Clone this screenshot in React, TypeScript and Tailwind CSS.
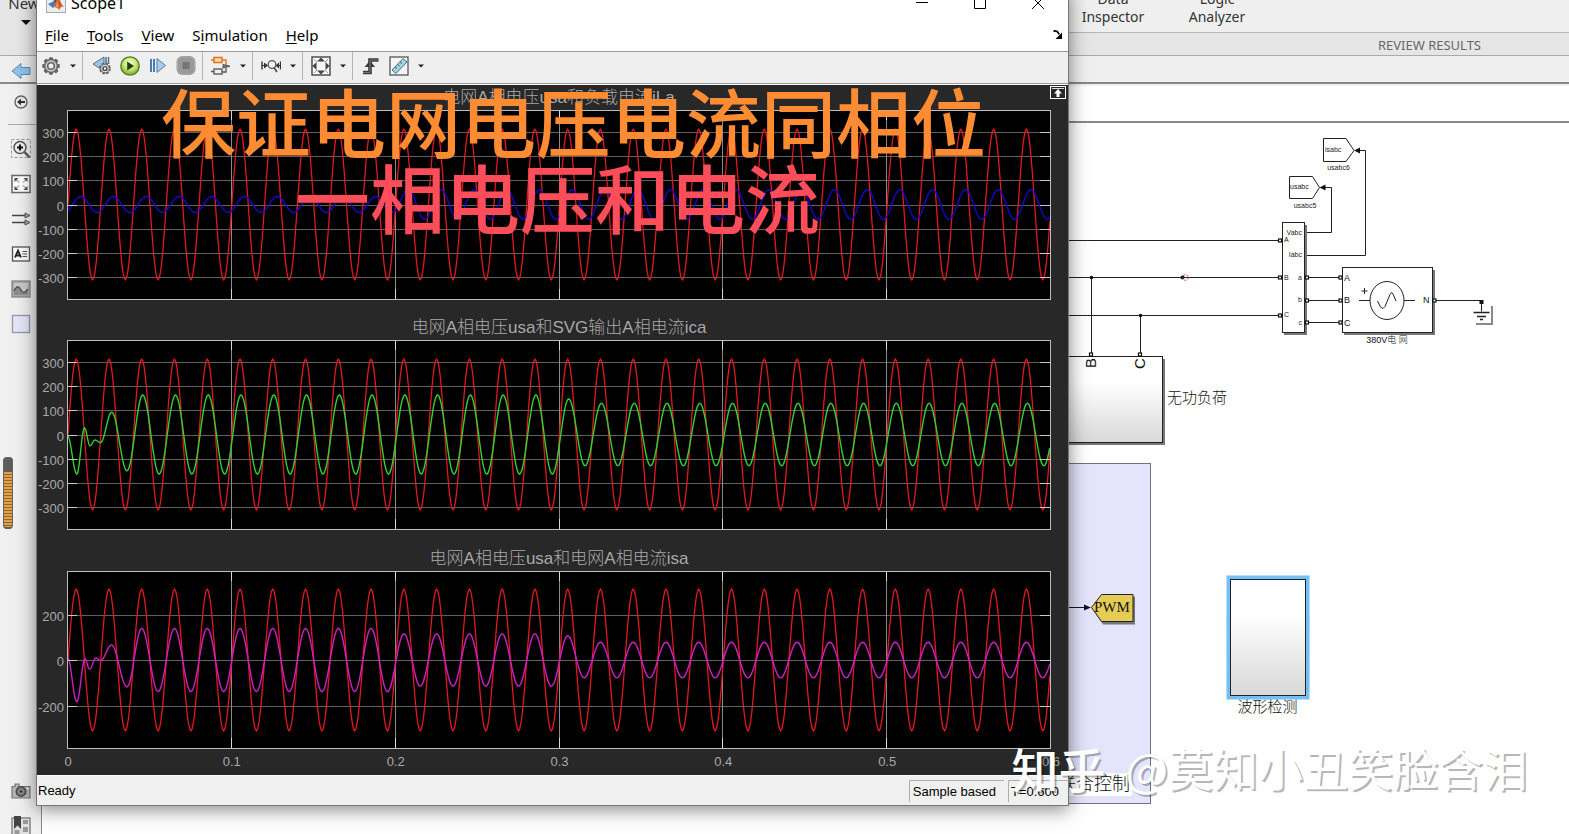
import React from "react";

type Point = [number, number];

const PLOT_LEFT = 30;
const PLOT_WIDTH = 983;
const SECONDS = 0.6;
const PX_PER_CYCLE = PLOT_WIDTH / (SECONDS / 0.02);

/** Joins successive extremes of a signal with half-cosine arcs. */
function trace(extremes: Point[], zero: number, scale: number): string {
  const out: string[] = [];
  const end = PLOT_LEFT + PLOT_WIDTH;
  for (let i = 0; i < extremes.length - 1; i++) {
    const [x0, v0] = extremes[i];
    const [x1, v1] = extremes[i + 1];
    const steps = 14;
    for (let s = 0; s < steps; s++) {
      const k = s / steps;
      const x = x0 + (x1 - x0) * k;
      if (x < PLOT_LEFT || x > end) continue;
      const v = v0 + ((v1 - v0) * (1 - Math.cos(Math.PI * k))) / 2;
      out.push(`${(x + 0.5).toFixed(2)},${(zero - v * scale).toFixed(2)}`);
    }
  }
  return out.join(" ");
}

/** Extremes of a 50 Hz sine; amplitude is looked up per half cycle. */
function sineExtremes(delay: number, firstHalf: number, amp: (t: number) => number): Point[] {
  const pts: Point[] = [];
  for (let n = firstHalf; n < 62; n++) {
    const x = PLOT_LEFT + delay + PX_PER_CYCLE * (0.25 + n / 2);
    const t = 0.005 + n * 0.01;
    pts.push([x, (n % 2 === 0 ? 1 : -1) * amp(t)]);
  }
  return pts;
}

const voltage = sineExtremes(0.5, -1, () => 311);
const loadCurrent = sineExtremes(5, -1, (t) => (t < 0.2 ? 33 : 61));
const svgCurrent: Point[] = [
  [30, -5], [39.3, -163], [47, 27], [52.5, -46], [57.5, -23], [63, -33], [74.3, 92], [89.5, -150],
  ...sineExtremes(1.5, 4, (t) => (t < 0.3 ? 163 : t < 0.31 ? 147 : 129)),
];
const gridCurrent: Point[] = [
  [30, 12], [39.3, -183], [47.5, 5], [52, -40], [58.5, 9], [63, -3], [74, 66], [89.5, -118],
  ...sineExtremes(0.5, 4, (t) => (t < 0.2 ? 139 : t < 0.3 ? 115 : t < 0.31 ? 106 : 78)),
];

interface PlotProps {
  title: string;
  height: number;
  bottom: number;
  zero: number;
  scale: number;
  ticks: number[];
  signal: Point[];
  color: string;
  timeAxis?: boolean;
}

function Plot({ title, height, bottom, zero, scale, ticks, signal, color, timeAxis }: PlotProps) {
  const right = PLOT_LEFT + PLOT_WIDTH;
  const verticals = [1, 2, 3, 4, 5].map((n) => Math.round(PLOT_LEFT + (PLOT_WIDTH * n) / 6) + 0.5);
  return (
    <section className="flex flex-col">
      <h2 className="h-6 pr-[17px] pl-[30px] text-center text-[17px] leading-6 font-light whitespace-nowrap text-[#a8a8a8]">
        {title}
      </h2>
      <svg viewBox={`0 0 1031 ${height}`} className="block w-full" role="img" aria-label={title}>
        <rect x={PLOT_LEFT + 0.5} y="0.5" width={PLOT_WIDTH} height={bottom} fill="#000" />
        {ticks.map((v) => {
          const y = Math.round(zero - v * scale) + 0.5;
          return <path key={v} d={`M${PLOT_LEFT} ${y}H${right}`} stroke="#5c625f" />;
        })}
        {verticals.map((x) => (
          <path key={x} d={`M${x} 0V${bottom}`} stroke="#8a8a8a" />
        ))}
        <polyline points={trace(voltage, zero, scale)} fill="none" stroke="#e0191f" strokeWidth="1.3" />
        <polyline points={trace(signal, zero, scale)} fill="none" stroke={color} strokeWidth="1.4" />
        {ticks.map((v) => {
          const y = Math.round(zero - v * scale) + 0.5;
          return <path key={v} d={`M${PLOT_LEFT} ${y}h10M${right} ${y}h-10`} stroke="#c8c8c8" />;
        })}
        {verticals.map((x) => (
          <path key={x} d={`M${x} 0v10M${x} ${bottom}v-10`} stroke="#d8d8d8" />
        ))}
        <rect x={PLOT_LEFT + 0.5} y="0.5" width={PLOT_WIDTH} height={bottom} fill="none" stroke="#bdbdbd" />
        <g fill="#a8a8a8" fontSize="13">
          {ticks.map((v) => (
            <text key={v} x="27" y={zero - v * scale + 6} textAnchor="end">
              {v}
            </text>
          ))}
          {timeAxis &&
            [0, 0.1, 0.2, 0.3, 0.4, 0.5, 0.6].map((t, n) => (
              <text key={t} x={PLOT_LEFT + 1 + (PLOT_WIDTH * n) / 6} y={bottom + 18} textAnchor="middle">
                {t}
              </text>
            ))}
        </g>
      </svg>
    </section>
  );
}

function Icon({ children, size = 20 }: { children: React.ReactNode; size?: number }) {
  return (
    <svg viewBox="0 0 20 20" width={size} height={size} fill="none" aria-hidden="true" className="shrink-0">
      {children}
    </svg>
  );
}

function Tool({ label, children }: { label: string; children: React.ReactNode }) {
  return (
    <button type="button" aria-label={label} className="flex h-7 w-7 items-center justify-center">
      <Icon>{children}</Icon>
    </button>
  );
}

function Caret({ label }: { label: string }) {
  return (
    <button type="button" aria-label={label} className="flex h-7 w-4 items-center justify-center">
      <svg viewBox="0 0 6 4" className="h-1 w-1.5" aria-hidden="true">
        <path d="M0 0.5h6L3 3.5z" fill="#222" />
      </svg>
    </button>
  );
}

function Separator() {
  return <span className="mr-1 ml-px h-7 w-px bg-[#b4b4b4]" />;
}

const gearTeeth = [0, 45, 90, 135, 180, 225, 270, 315];

function Toolbar() {
  return (
    <div className="flex h-8 shrink-0 items-center border-t border-[#999] bg-[#efefef] pb-[3px]" role="toolbar">
      <Tool label="Configuration">
        {gearTeeth.map((a) => (
          <rect key={a} x="8" y="1.2" width="4" height="5" rx="1" fill="#666" transform={`rotate(${a} 10 10)`} />
        ))}
        <circle cx="10" cy="10" r="6.4" fill="#ccc" stroke="#666" strokeWidth="1.5" />
        <circle cx="10" cy="10" r="3.3" fill="#eee" stroke="#666" strokeWidth="1.6" />
      </Tool>
      <Caret label="Configuration menu" />
      <Separator />
      <div className="flex px-px">
        <Tool label="Step back">
          <path d="M1 8 12 1v14z" fill="#9fc4e4" stroke="#4b7094" />
          <path d="M14 1v6M16.500 1v7" stroke="#4b7094" strokeWidth="1.5" />
          <circle cx="13" cy="12.500" r="5" fill="#ddd" stroke="#555" strokeWidth="1.6" strokeDasharray="2.600 1.300" />
          <circle cx="13" cy="12.500" r="4.300" fill="#ddd" stroke="#666" />
          <circle cx="13" cy="12.500" r="1.900" fill="#fff" stroke="#444" strokeWidth="1.400" />
        </Tool>
        <Tool label="Run">
          <defs>
            <radialGradient id="run" cx=".5" cy=".35" r=".6">
              <stop offset="0" stopColor="#f3fbd9" />
              <stop offset=".55" stopColor="#cbe87a" />
              <stop offset="1" stopColor="#84b52c" />
            </radialGradient>
          </defs>
          <circle cx="10" cy="10" r="9.200" fill="url(#run)" stroke="#527a1c" strokeWidth="1.300" />
          <path d="M7.200 5.500v9l6.800-4.500z" fill="#263d12" />
        </Tool>
        <Tool label="Step forward">
          <path d="M3 3v13M6 3v13" stroke="#4b7cb0" strokeWidth="2" />
          <path d="M9 2.500v14l8.500-7z" fill="#a8cdea" stroke="#4b7cb0" />
        </Tool>
        <Tool label="Stop">
          <rect x=".5" y="0" width="19" height="19" rx="6" fill="#999" />
          <rect x="1.500" y="1" width="17" height="17" rx="5" stroke="#aaa" />
          <rect x="6.500" y="6" width="7" height="7" fill="#747474" />
        </Tool>
      </div>
      <Separator />
      <Tool label="Highlight block">
        <rect x="3" y="1.500" width="8" height="5" fill="#fbd9b0" stroke="#e07a20" strokeWidth="1.600" />
        <path d="M0 4h3M11 4h4v5" stroke="#e07a20" strokeWidth="1.400" />
        <path d="M12 8.500v3.500l7-1.800z" fill="#777" stroke="#555" />
        <path d="M15 12v4h-4M0 15.500h3" stroke="#555" strokeWidth="1.300" />
        <rect x="3" y="13" width="8" height="5" fill="#eee" stroke="#666" strokeWidth="1.500" />
      </Tool>
      <Caret label="Highlight menu" />
      <Separator />
      <Tool label="Zoom">
        <path d="M1 5.500v8M19.500 5.500v8" stroke="#333" strokeWidth="1.400" />
        <path d="M1 9.500h4M3 7l3.500 2.500L3 12M19 9.500h-3M18 7l-3 2.500 3 2.500" fill="#333" stroke="#333" />
        <circle cx="11" cy="8.500" r="3.800" fill="#f5f5f5" stroke="#555" strokeWidth="1.300" />
        <path d="m13 11.500 3 4.500" stroke="#555" strokeWidth="1.800" />
      </Tool>
      <Caret label="Zoom menu" />
      <Separator />
      <Tool label="Scale axes">
        <rect x="1" y="1" width="18" height="18" fill="#fafafa" stroke="#444" strokeWidth="1.400" />
        <path d="m10 1.500 4 4H6zM10 18.500l4-4H6zM1.500 10l4-4v8zM18.500 10l-4-4v8z" fill="#444" />
        <path d="m3 3 3 3M17 3l-3 3M3 17l3-3M17 17l-3-3" stroke="#999" />
      </Tool>
      <Caret label="Scale menu" />
      <Separator />
      <Tool label="Trigger">
        <path d="M2 16.500h7V4h8.500" stroke="#3a3a3a" strokeWidth="3.600" />
        <path d="m9 4.500 5 6.500H3.500z" fill="#3a3a3a" />
        <path d="M2 16.500h7V4h8.500" stroke="#777" strokeWidth="1" />
      </Tool>
      <Tool label="Measurements">
        <rect x="1" y="1" width="18" height="18" fill="#f5f5f5" stroke="#555" strokeWidth="1.300" />
        <path d="M3 14 14 2.500l4 3.500L7 17.500z" fill="#a9cfe2" stroke="#3e738c" />
        <path d="m6 11 2 1.600M8.500 8.500l2 1.600M11 6l2 1.600" stroke="#2d5f78" />
      </Tool>
      <Caret label="Measurements menu" />
    </div>
  );
}

const menus: [string, string, string][] = [
  ["", "F", "ile"],
  ["", "T", "ools"],
  ["", "V", "iew"],
  ["S", "i", "mulation"],
  ["", "H", "elp"],
];

function ScopeWindow() {
  return (
    <div className="absolute top-[-11px] right-[500px] bottom-[28px] left-9 flex flex-col border border-[#777] bg-white shadow-[0_3px_18px_rgba(0,0,0,0.5)]">
      <header className="flex h-[29px] shrink-0 items-center pb-1 pl-[9px]">
        <svg viewBox="0 0 20 20" className="h-5 w-5" aria-hidden="true">
          <rect x=".5" y=".5" width="19" height="19" fill="#e8eef2" stroke="#aaa" />
          <path d="m2 11 5-2.500 3 2.500-3 4z" fill="#3d7fb5" />
          <path d="m7 8.500 4.500-5.500 1 3-2.500 5z" fill="#7a4a5a" />
          <path d="M11.500 3c2 3 3.500 8 6.500 11-2-1-3-1-5 3-1-2-3-3-5.500-2.500C10 12 10.500 6 11.500 3z" fill="#d8572a" />
          <path d="M11.500 4c0 4 .5 9 1.500 12-1-2-2-2.500-4-2 2-2 2-6 2.500-10z" fill="#f0a13c" />
        </svg>
        <h1 className="grow pl-[5px] text-base leading-5">Scope1</h1>
        <div className="flex gap-[38px] pr-5">
          {[
            ["Minimize", "M4 9.500h12"],
            ["Maximize", "M4.500 4.500h11v11h-11z"],
            ["Close", "m4 4 12 12M16 4 4 16"],
          ].map(([name, d]) => (
            <button key={name} type="button" aria-label={name} className="h-5 w-5">
              <Icon>
                <path d={d} stroke="#000" />
              </Icon>
            </button>
          ))}
        </div>
      </header>
      <nav className="flex h-8 shrink-0 items-center gap-[18px] pl-2 text-[15px] leading-6">
        {menus.map(([before, key, after]) => (
          <button key={after} type="button">
            {before}
            <span className="underline underline-offset-2">{key}</span>
            {after}
          </button>
        ))}
        <button type="button" aria-label="Dock" className="mr-[5px] ml-auto">
          <Icon size={10}>
            <path d="M1 3c5-3 10 1 11 6" stroke="#000" strokeWidth="3.500" />
            <path d="M18 5v13H5z" fill="#000" />
          </Icon>
        </button>
      </nav>
      <Toolbar />
      <main className="relative flex grow flex-col border-t border-[#999] bg-[#282828] font-['Liberation_Sans','Noto_Sans_CJK_SC',sans-serif] shadow-[inset_0_1px_0_#fff]">
        <div className="flex flex-col gap-4 pt-[2px]">
          <Plot
            title="电网A相电压usa和负载电流iLa"
            height={190}
            bottom={189}
            zero={94.5}
            scale={0.2423}
            ticks={[300, 200, 100, 0, -100, -200, -300]}
            signal={loadCurrent}
            color="#1408c8"
          />
          <Plot
            title="电网A相电压usa和SVG输出A相电流ica"
            height={191}
            bottom={189}
            zero={94.5}
            scale={0.2423}
            ticks={[300, 200, 100, 0, -100, -200, -300]}
            signal={svgCurrent}
            color="#2fd22f"
          />
          <Plot
            title="电网A相电压usa和电网A相电流isa"
            height={200}
            bottom={177}
            zero={89}
            scale={0.2275}
            ticks={[200, 0, -200]}
            signal={gridCurrent}
            color="#cf1fc4"
            timeAxis
          />
        </div>
        <button type="button" aria-label="Maximize axes" className="absolute top-0.5 right-0.5">
          <svg viewBox="0 0 16 13" className="h-[13px] w-4" aria-hidden="true">
            <rect x=".5" y=".5" width="15" height="12" fill="#282828" stroke="#fff" />
            <path d="M2 2.500h12" stroke="#ddd" />
            <path d="m8 3 4 4.500H9.500V11h-3V7.500H4z" fill="#fff" />
          </svg>
        </button>
      </main>
      <footer className="flex h-[30px] shrink-0 items-center border-t border-white bg-[#f0f0f0] font-['Liberation_Sans',sans-serif] text-[13px]">
        <span className="grow pl-px">Ready</span>
        <span className="h-[22px] border-t border-l border-[#b0b0b0] pr-2 pl-[3px] leading-[22px]">Sample based</span>
        <span className="ml-1 h-[22px] border-t border-l border-[#b0b0b0] pr-[9px] pl-[2px] leading-[22px]">T=0.600</span>
      </footer>
    </div>
  );
}

function PaletteButton({ label, children }: { label: string; children: React.ReactNode }) {
  return (
    <button type="button" aria-label={label} className="flex h-[35px] w-full shrink-0 items-center justify-center">
      <Icon>{children}</Icon>
    </button>
  );
}

function Palette() {
  return (
    <aside className="relative flex w-[42px] shrink-0 flex-col border-r border-[#888] bg-[#f0f0f0]">
      <div className="flex h-full w-[41px] flex-col overflow-hidden">
        <PaletteButton label="Hide browser">
          <circle cx="10" cy="10" r="6" fill="#eee" stroke="#666" strokeWidth="1.400" />
          <path d="m6 10 4-3.500v2.500h4v2h-4v2.500z" fill="#333" />
        </PaletteButton>
        <hr className="mt-[5px] mb-1.5 ml-2 border-[#aaa]" />
        <PaletteButton label="Zoom in">
          <rect x=".5" y=".5" width="19" height="18" stroke="#999" strokeDasharray="3 2" />
          <circle cx="9" cy="8.500" r="6" fill="#eee" stroke="#555" strokeWidth="1.500" />
          <path d="M9 5.500v6M6 8.500h6" stroke="#111" strokeWidth="2" />
          <path d="m13.500 13 5 5.500" stroke="#555" strokeWidth="2.400" />
        </PaletteButton>
        <PaletteButton label="Fit to view">
          <rect x="1" y="1.500" width="18" height="17" fill="#fff" stroke="#666" strokeWidth="1.500" />
          <path d="M3.500 8V4h4zM12.500 4h4v4zM3.500 12v4h4zM12.500 16h4v-4z" fill="#444" />
          <path d="m4 4.500 4 4M16 4.500l-4 4M4 15.500l4-4M16 15.500l-4-4" stroke="#666" />
        </PaletteButton>
        <PaletteButton label="Signals">
          <path d="M1 6.500h15M1 13.500h15" stroke="#444" strokeWidth="1.300" />
          <path d="m14 4 5 2.500-5 2.500zM14 11l5 2.500-5 2.500z" fill="#aaa" stroke="#555" />
        </PaletteButton>
        <PaletteButton label="Annotation">
          <rect x="1.500" y="3" width="17" height="14" fill="#fafafa" stroke="#555" strokeWidth="1.300" />
          <path d="M4 13.500 7 6.500l3 7M5 11.500h4" stroke="#222" strokeWidth="1.800" />
          <path d="M11.500 7.500H16M11.500 10H16M11.500 12.500H16" stroke="#555" />
        </PaletteButton>
        <PaletteButton label="Image">
          <rect x="1" y="2" width="18" height="16" fill="#aaa" stroke="#888" strokeWidth="1.300" />
          <rect x="3" y="4" width="14" height="12" fill="#c9c9c9" />
          <path d="M3 12c3-6 5-5 7-1s4 3 7-1v6H3z" fill="#8c8c8c" />
          <path d="M3 12c3-6 5-5 7-1s4 3 7-1" stroke="#555" strokeWidth="1.500" />
        </PaletteButton>
        <PaletteButton label="Area">
          <rect x="1.500" y="1.500" width="17" height="17" fill="#e6e6f8" stroke="#9a9ab0" strokeWidth="1.400" />
        </PaletteButton>
        <div className="mt-auto -mb-[9px] flex flex-col">
          <PaletteButton label="Screenshot">
            <path d="M1 5.500h3V3h4v2.500h11V17H1z" fill="#b5b5b5" stroke="#777" strokeWidth="1.200" />
            <circle cx="10" cy="10.500" r="4.800" fill="#777" stroke="#444" strokeWidth="1.300" />
            <circle cx="10" cy="10.500" r="2" fill="#333" stroke="#aaa" />
            <path d="M15.500 7.500h2" stroke="#fff" strokeWidth="1.500" />
          </PaletteButton>
          <PaletteButton label="Model browser">
            <rect x="1" y="2" width="18" height="20" fill="#e0e0e0" stroke="#777" strokeWidth="1.300" />
            <path d="M3 0h7v13L6.500 9.500 3 13z" fill="#444" />
            <path d="M12 4h5v4h-5zM12 11h5v5h-5zM3.500 14h5v4h-5z" fill="#999" />
          </PaletteButton>
        </div>
      </div>
      <svg viewBox="0 0 10 72" className="absolute top-[373px] left-[3px] h-[72px] w-2.5" aria-hidden="true">
        <rect width="10" height="72" rx="4" fill="#5d5d5d" />
        <rect y="15" width="10" height="55" rx="2" fill="#e3a044" />
        {Array.from({ length: 18 }, (_, i) => (
          <path key={i} d={`M0 ${17.5 + i * 3}h10`} stroke="#8a6a3c" />
        ))}
        <rect x=".5" y=".5" width="9" height="71" rx="4" fill="none" stroke="#6b6258" />
      </svg>
    </aside>
  );
}

function Port({ x, y }: { x: number; y: number }) {
  return <rect x={x - 1.5} y={y - 1.5} width="3" height="3" fill="#fff" stroke="#111" strokeWidth="1.200" />;
}

function Diagram() {
  return (
    <svg
      viewBox="1050 123 519 711"
      className="ml-auto block h-[711px] w-[519px] shrink-0 font-['Liberation_Sans','Noto_Sans_CJK_SC',sans-serif]"
      role="img"
      aria-label="Simulink model"
      fill="none"
      stroke="#222"
    >
      <defs>
        <linearGradient id="block" x2="0" y2="1">
          <stop offset=".3" stopColor="#fff" />
          <stop offset="1" stopColor="#d8d8d8" />
        </linearGradient>
      </defs>

      <rect x="1040.500" y="463.500" width="110" height="340" fill="#e4e4fd" stroke="#707088" />
      <rect x="1052" y="773" width="80" height="23" fill="#fff" stroke="none" />

      <path d="M1050 240.500h230M1050 277.500h230M1050 315.500h230M1091.500 277.500v77M1140.500 315.500v39" />
      <path d="M1306 232.500h25.500v-45h-7M1306 255.500h59.500v-105h-7" />
      <path d="M1306 277.500h36M1306 300.500h36M1306 322.500h36M1434 300.500h47.500v11" />
      <path d="m1319.500 187.500 6-3v6zM1354 150.500l6-3v6z" fill="#111" stroke="none" />
      <circle cx="1091.500" cy="277.500" r="1.800" fill="#111" stroke="none" />
      <circle cx="1140.500" cy="315.500" r="1.800" fill="#111" stroke="none" />
      <circle cx="1182.500" cy="277.500" r="2" fill="#111" stroke="none" />
      <circle cx="1185.500" cy="277.500" r="2.800" stroke="#c33" strokeDasharray="2 1.500" />

      <path d="M1323.500 138.500h22.500l8 12-8 11h-22.500zM1289.500 176.500h23l7 11-7 11h-23z" fill="#fff" />

      <rect x="1284" y="225" width="23" height="110" fill="#777" stroke="none" />
      <rect x="1282.500" y="222.500" width="22" height="110" fill="#fff" />
      <rect x="1344" y="270" width="91" height="65" fill="#777" stroke="none" />
      <rect x="1342.500" y="267.500" width="90" height="65" fill="#fff" />
      <ellipse cx="1387" cy="300.500" rx="17" ry="19" />
      <path d="M1359 300.500h11M1404 300.500h11M1364.500 288v6M1361.500 291h6" />
      <path d="m1377.500 301 3 6 2.500 1.500 2-2 5-12 1.500-2 1.500 1.500 3 7" />

      <rect x="1052" y="359" width="113" height="86" fill="#777" stroke="none" />
      <rect x="1050.500" y="356.500" width="112" height="86" fill="url(#block)" />
      <path d="M1476 324h16v-18" stroke="#888" strokeWidth="2" />
      <path d="M1473.500 312.500h16M1477 316.500h9M1480 319.500h3" strokeWidth="1.400" />
      <rect x="1479.500" y="300" width="4" height="4" fill="#111" stroke="none" />

      <Port x={1280} y={240.5} />
      <Port x={1280} y={277.5} />
      <Port x={1280} y={315.5} />
      <Port x={1307} y={277.5} />
      <Port x={1307} y={300.5} />
      <Port x={1307} y={322.5} />
      <Port x={1340.5} y={277.5} />
      <Port x={1340.5} y={300.5} />
      <Port x={1340.5} y={322.5} />
      <Port x={1434.5} y={300.5} />
      <Port x={1091} y={354.5} />
      <Port x={1140} y={354.5} />

      <path d="M1068 607.500h17" stroke="#113" />
      <path d="m1091 607.500-7-3v6z" fill="#113" stroke="none" />
      <path d="m1093 609.500 10-13h32v28h-32z" fill="#777" stroke="none" />
      <path d="m1091.500 607.500 10-13h31.500v27h-31.500z" fill="#e5cd55" />

      <rect x="1228.500" y="577.500" width="79" height="120" stroke="#72c0f5" strokeWidth="4" fill="none" />
      <rect x="1230.500" y="579.500" width="75" height="116" fill="url(#block)" />

      <g fill="#222" stroke="none" fontSize="7">
        <text x="1325" y="152">isabc</text>
        <text x="1290" y="189">usabc</text>
        <text x="1338.500" y="170" textAnchor="middle">usabc6</text>
        <text x="1305" y="208" textAnchor="middle">usabc5</text>
        <text x="1302" y="235" textAnchor="end">Vabc</text>
        <text x="1302" y="257" textAnchor="end">Iabc</text>
        <text x="1284" y="242">A</text>
        <text x="1284" y="280">B</text>
        <text x="1284" y="317">C</text>
        <text x="1302" y="280" textAnchor="end">a</text>
        <text x="1302" y="302" textAnchor="end">b</text>
        <text x="1302" y="325" textAnchor="end">c</text>
      </g>
      <g fill="#111" stroke="none" fontSize="9">
        <text x="1344" y="281">A</text>
        <text x="1344" y="303">B</text>
        <text x="1344" y="326">C</text>
        <text x="1423" y="303">N</text>
        <text x="1387" y="343" textAnchor="middle" fontWeight="300">380V电 网</text>
      </g>
      <g fill="#111" stroke="none" fontSize="15">
        <text transform="translate(1096 368) rotate(-90)">B</text>
        <text transform="translate(1145 369) rotate(-90)">C</text>
        <text x="1167" y="403" fontWeight="300">无功负荷</text>
        <text x="1267.500" y="712" fontWeight="300" textAnchor="middle">波形检测</text>
        <text x="1058" y="790" fontWeight="300" fontSize="18">联合控制</text>
        <text x="1094" y="612" fontFamily="Liberation Serif, serif">PWM</text>
      </g>
    </svg>
  );
}

export default function App() {
  return (
    <div className="relative flex h-screen flex-col overflow-hidden bg-white font-['Noto_Sans','Noto_Sans_CJK_SC',sans-serif] text-black">
      <header className="flex h-14 shrink-0 border-b border-[#aaa] bg-[#e6e6e6] text-[14px] text-[#333]">
        <button type="button" className="-mt-1.5 flex w-[42px] flex-col items-center gap-2 self-start pl-1.5 text-[15px] leading-[18px]">
          New
          <svg viewBox="0 0 10 5" className="ml-1 h-[5px] w-2.5" aria-hidden="true">
            <path d="M0 0h10L5 5z" fill="#111" />
          </svg>
        </button>
        <div className="flex grow flex-col">
          <div className="flex h-[33px] shrink-0 justify-end border-b border-[#b5b5b5] bg-[#efefef] pr-[316px]">
            <div className="-mt-[10px] flex gap-8 text-center leading-[18px]">
              <button type="button" className="w-[72px] self-start">
                Data
                <br />
                Inspector
              </button>
              <button type="button" className="w-[72px] self-start">
                Logic
                <br />
                Analyzer
              </button>
            </div>
          </div>
          <p className="shrink-0 pt-[3px] pr-[88px] text-right text-[13px] leading-[19px] text-[#666]">REVIEW RESULTS</p>
        </div>
      </header>
      <div className="flex h-7 shrink-0 border-b-2 border-[#888] bg-[#efefef]">
        <button type="button" aria-label="Back" className="flex w-[41px] items-center justify-center pt-1">
          <Icon>
            <path d="M1 10 10 2.500v4h9v7h-9v4z" fill="#8fc4e8" stroke="#5b8db5" />
          </Icon>
        </button>
      </div>
      <div className="flex min-h-0 grow">
        <Palette />
        <div className="flex min-w-0 grow flex-col">
          <div className="h-[39px] shrink-0 border-t-2 border-b-2 border-t-[#f2f2f2] border-b-[#888] bg-white" />
          <Diagram />
        </div>
      </div>

      <ScopeWindow />

      <div className="pointer-events-none absolute top-[82px] left-[161px] flex flex-col font-['Noto_Sans_CJK_SC',sans-serif] text-[75px] leading-[76px] font-medium whitespace-nowrap">
        <p className="text-[#ff8c32]">保证电网电压电流同相位</p>
        <p className="pl-[134px] text-[#ff4d5a]">一相电压和电流</p>
      </div>
      <p className="pointer-events-none absolute right-[41px] bottom-[36px] flex font-['Noto_Sans_CJK_SC',sans-serif] text-[45px] leading-[60px] whitespace-nowrap text-white [text-shadow:2px_2px_0_rgba(0,0,0,0.3)]">
        <span className="pr-5 text-[47px] font-medium">知乎</span>
        <span>@莫知小丑笑脸含泪</span>
      </p>
    </div>
  );
}
